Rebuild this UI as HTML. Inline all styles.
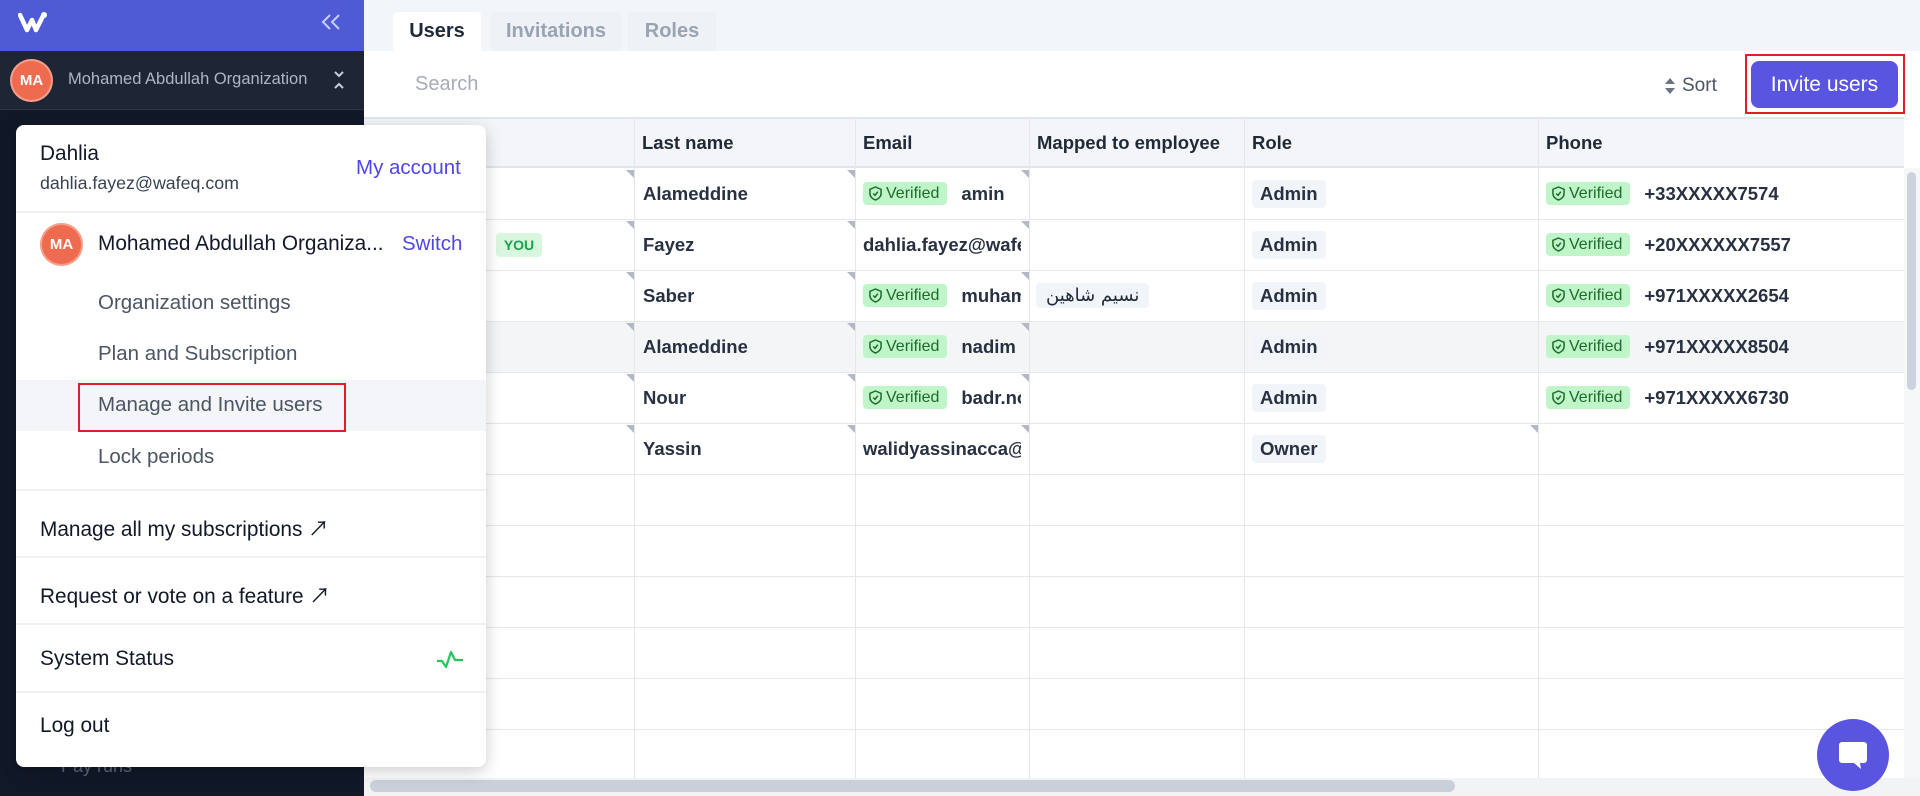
<!DOCTYPE html>
<html><head><meta charset="utf-8"><style>
*{box-sizing:border-box;margin:0;padding:0}
body{width:1920px;height:796px;overflow:hidden;position:relative;background:#fff;font-family:"Liberation Sans","Noto Sans CJK SC",sans-serif;color:#1f2937}
.a{position:absolute}
.sb{left:0;top:0;width:364px;height:796px;background:#111827}
.top{left:0;top:0;width:364px;height:51px;background:#4f5bd5}
.org{left:0;top:51px;width:364px;height:59px;background:#1e2636;border-bottom:1px solid #2d3546}
.av{border-radius:50%;background:#ee6b4f;color:#fff;font-weight:bold;display:flex;align-items:center;justify-content:center;box-shadow:inset 0 0 0 2px rgba(255,255,255,.35)}
.tabs{left:364px;top:0;width:1556px;height:51px;background:#f3f6f9}
.tab{top:12px;height:39px;font-size:20px;font-weight:bold;color:#9aa3b2;display:flex;align-items:center;justify-content:center;background:#eef2f6;border-radius:4px 4px 0 0}
.hdr{left:364px;top:117px;width:1540px;height:51px;background:#f3f5f8;border-top:2px solid #e2e6ea;border-bottom:2px solid #e2e6ea}
.th{top:117px;height:51px;display:flex;align-items:center;font-size:18.5px;font-weight:bold;color:#1f2937;padding-left:8px}
.vl{top:117px;width:1px;height:667px;background:#e5e7eb}
.hl{left:364px;width:1540px;height:1px;background:#e5e7eb}
.cell{height:51px;display:flex;align-items:center;font-size:18.5px;font-weight:bold;color:#283142;white-space:nowrap;overflow:hidden}
.ver{display:inline-flex;align-items:center;gap:4px;background:#bff5c9;color:#1d6b2b;font-weight:normal;font-size:16px;padding:2px 8px 2px 6px;border-radius:4px;height:23px;margin-right:14px}
.role{background:#f1f4f8;padding:3px 8px;border-radius:4px}
.tri{width:0;height:0;border-top:8px solid #b3b9c4;border-left:8px solid transparent}
.dd{left:16px;top:125px;width:470px;height:642px;background:#fff;border-radius:8px;box-shadow:0 4px 16px rgba(0,0,0,.2)}
.mi{font-size:20.8px;color:#111827}
.sub{font-size:20.5px;color:#4b5563}
.dv{left:16px;width:470px;height:2px;background:#eef0f3}
</style></head><body>
<div class="a sb"></div>
<div class="a top"></div>
<svg class="a" style="left:18px;top:11px" width="30" height="22" viewBox="0 0 30 22"><path d="M2 4 L9 19 L14 9 L18 19 L25 5" stroke="#fff" stroke-width="4.5" fill="none" stroke-linejoin="round" stroke-linecap="round"/><circle cx="26" cy="4" r="3" fill="#fff"/></svg>
<svg class="a" style="left:320px;top:13px" width="22" height="18" viewBox="0 0 22 18"><path d="M10 2 L3 9 L10 16 M19 2 L12 9 L19 16" stroke="#c7cdf5" stroke-width="2" fill="none"/></svg>
<div class="a org"></div>
<div class="a av" style="left:10px;top:59px;width:43px;height:43px;font-size:15px">MA</div>
<div class="a" style="left:68px;top:70px;font-size:16.5px;color:#aeb6c4">Mohamed Abdullah Organization</div>
<svg class="a" style="left:332px;top:70px" width="14" height="20" viewBox="0 0 14 20"><path d="M3 2 L7 6 L11 2 M3 18 L7 14 L11 18" stroke="#c9ced8" stroke-width="2" fill="none"/></svg>
<div class="a" style="left:61px;top:756px;font-size:18px;color:#5c6577">Pay runs</div>

<div class="a tabs"></div>
<div class="a tab" style="left:393px;width:88px;background:#fff;color:#1f2937">Users</div>
<div class="a tab" style="left:490px;width:132px">Invitations</div>
<div class="a tab" style="left:628px;width:88px">Roles</div>
<div class="a" style="left:415px;top:73px;font-size:20px;color:#a5acb8">Search</div>
<svg class="a" style="left:1664px;top:77px" width="12" height="18" viewBox="0 0 12 18"><path d="M6 1 L11 7 H1Z M6 17 L11 11 H1Z" fill="#6b7280"/></svg>
<div class="a" style="left:1682px;top:75px;font-size:19px;color:#4b5563">Sort</div>
<div class="a" style="left:1745px;top:54px;width:160px;height:60px;border:2px solid #e11d2a"></div>
<div class="a" style="left:1751px;top:61px;width:147px;height:47px;background:#5a55e0;border-radius:8px;color:#fff;font-size:21px;display:flex;align-items:center;justify-content:center">Invite users</div>

<div class="a hdr"></div>
<div class="a th" style="left:364px;width:270px">First name</div>
<div class="a th" style="left:634px">Last name</div>
<div class="a th" style="left:855px">Email</div>
<div class="a th" style="left:1029px">Mapped to employee</div>
<div class="a th" style="left:1244px">Role</div>
<div class="a th" style="left:1538px">Phone</div>

<div class="a" style="left:364px;top:321px;width:1540px;height:51px;background:#f3f5f7"></div>
<div class="a hl" style="top:219px"></div><div class="a hl" style="top:270px"></div><div class="a hl" style="top:321px"></div><div class="a hl" style="top:372px"></div><div class="a hl" style="top:423px"></div><div class="a hl" style="top:474px"></div><div class="a hl" style="top:525px"></div><div class="a hl" style="top:576px"></div><div class="a hl" style="top:627px"></div><div class="a hl" style="top:678px"></div><div class="a hl" style="top:729px"></div>
<div class="a vl" style="left:634px"></div><div class="a vl" style="left:855px"></div><div class="a vl" style="left:1029px"></div><div class="a vl" style="left:1244px"></div><div class="a vl" style="left:1538px"></div>

<div class="a tri" style="left:626px;top:170px"></div><div class="a tri" style="left:847px;top:170px"></div><div class="a tri" style="left:1021px;top:170px"></div>
<div class="a tri" style="left:626px;top:221px"></div><div class="a tri" style="left:847px;top:221px"></div><div class="a tri" style="left:1021px;top:221px"></div>
<div class="a tri" style="left:626px;top:272px"></div><div class="a tri" style="left:847px;top:272px"></div><div class="a tri" style="left:1021px;top:272px"></div>
<div class="a tri" style="left:626px;top:323px"></div><div class="a tri" style="left:847px;top:323px"></div><div class="a tri" style="left:1021px;top:323px"></div>
<div class="a tri" style="left:626px;top:374px"></div><div class="a tri" style="left:847px;top:374px"></div><div class="a tri" style="left:1021px;top:374px"></div>
<div class="a tri" style="left:626px;top:425px"></div><div class="a tri" style="left:847px;top:425px"></div><div class="a tri" style="left:1021px;top:425px"></div><div class="a tri" style="left:1530px;top:425px"></div>

<div class="a cell" style="left:372px;top:270px">Mohamed</div>
<div class="a" style="left:496px;top:233px;width:46px;height:24px;background:#d9f7df;color:#16a34a;font-size:14px;font-weight:bold;border-radius:4px;display:flex;align-items:center;justify-content:center">YOU</div>

<div class="a cell" style="left:643px;top:168px">Alameddine</div>
<div class="a cell" style="left:643px;top:219px">Fayez</div>
<div class="a cell" style="left:643px;top:270px">Saber</div>
<div class="a cell" style="left:643px;top:321px">Alameddine</div>
<div class="a cell" style="left:643px;top:372px">Nour</div>
<div class="a cell" style="left:643px;top:423px">Yassin</div>

<svg width="0" height="0" style="position:absolute"><defs><symbol id="sh" viewBox="0 0 14 16"><path d="M7 1 L13 3.5 V8 C13 11.5 10 14 7 15 C4 14 1 11.5 1 8 V3.5Z" fill="none" stroke="#1d6b2b" stroke-width="1.6"/><path d="M4.5 8 L6.5 10 L9.5 6" fill="none" stroke="#1d6b2b" stroke-width="1.6"/></symbol></defs></svg>

<div class="a cell" style="left:863px;top:168px;width:158px"><span class="ver"><svg width="13" height="15"><use href="#sh"/></svg>Verified</span>amin</div>
<div class="a cell" style="left:863px;top:219px;width:158px">dahlia.fayez@wafeq.com</div>
<div class="a cell" style="left:863px;top:270px;width:158px"><span class="ver"><svg width="13" height="15"><use href="#sh"/></svg>Verified</span>muhammad</div>
<div class="a cell" style="left:863px;top:321px;width:158px"><span class="ver"><svg width="13" height="15"><use href="#sh"/></svg>Verified</span>nadim</div>
<div class="a cell" style="left:863px;top:372px;width:158px"><span class="ver"><svg width="13" height="15"><use href="#sh"/></svg>Verified</span>badr.nour</div>
<div class="a cell" style="left:863px;top:423px;width:158px">walidyassinacca@</div>

<div class="a cell" style="left:1036px;top:270px"><span style="background:#f1f4f8;padding:2px 10px;border-radius:4px;font-weight:normal;font-family:'DejaVu Sans',sans-serif;font-size:18px;color:#1f2937">نسيم شاهين</span></div>

<div class="a cell" style="left:1252px;top:168px"><span class="role">Admin</span></div>
<div class="a cell" style="left:1252px;top:219px"><span class="role">Admin</span></div>
<div class="a cell" style="left:1252px;top:270px"><span class="role">Admin</span></div>
<div class="a cell" style="left:1252px;top:321px"><span class="role">Admin</span></div>
<div class="a cell" style="left:1252px;top:372px"><span class="role">Admin</span></div>
<div class="a cell" style="left:1252px;top:423px"><span class="role">Owner</span></div>

<div class="a cell" style="left:1546px;top:168px"><span class="ver"><svg width="13" height="15"><use href="#sh"/></svg>Verified</span>+33XXXXX7574</div>
<div class="a cell" style="left:1546px;top:219px"><span class="ver"><svg width="13" height="15"><use href="#sh"/></svg>Verified</span>+20XXXXXX7557</div>
<div class="a cell" style="left:1546px;top:270px"><span class="ver"><svg width="13" height="15"><use href="#sh"/></svg>Verified</span>+971XXXXX2654</div>
<div class="a cell" style="left:1546px;top:321px"><span class="ver"><svg width="13" height="15"><use href="#sh"/></svg>Verified</span>+971XXXXX8504</div>
<div class="a cell" style="left:1546px;top:372px"><span class="ver"><svg width="13" height="15"><use href="#sh"/></svg>Verified</span>+971XXXXX6730</div>

<div class="a" style="left:1904px;top:168px;width:16px;height:616px;background:#f6f7f9"></div>
<div class="a" style="left:1907px;top:172px;width:9px;height:218px;background:#cdd3dc;border-radius:5px"></div>
<div class="a" style="left:364px;top:778px;width:1556px;height:18px;background:#f1f3f5"></div>
<div class="a" style="left:370px;top:780px;width:1085px;height:12px;background:#c9d0da;border-radius:6px"></div>
<div class="a" style="left:1817px;top:719px;width:72px;height:72px;border-radius:50%;background:#5a55e0"></div>
<svg class="a" style="left:1836px;top:738px" width="34" height="34" viewBox="0 0 34 34"><path d="M6 4 H28 A3 3 0 0 1 31 7 V22 A3 3 0 0 1 28 25 H24 L25 31 L18 25 H6 A3 3 0 0 1 3 22 V7 A3 3 0 0 1 6 4Z" fill="#fff"/></svg>

<div class="a dd"></div>
<div class="a mi" style="left:40px;top:142px">Dahlia</div>
<div class="a" style="left:40px;top:173px;font-size:17.8px;color:#374151">dahlia.fayez@wafeq.com</div>
<div class="a" style="left:356px;top:156px;font-size:20.5px;color:#4f46e5">My account</div>
<div class="a dv" style="top:211px"></div>
<div class="a av" style="left:40px;top:223px;width:43px;height:43px;font-size:15px">MA</div>
<div class="a mi" style="left:98px;top:232px">Mohamed Abdullah Organiza...</div>
<div class="a" style="left:402px;top:232px;font-size:20.5px;color:#4f46e5">Switch</div>
<div class="a sub" style="left:98px;top:291px">Organization settings</div>
<div class="a sub" style="left:98px;top:342px">Plan and Subscription</div>
<div class="a" style="left:16px;top:380px;width:470px;height:51px;background:#f3f5f8"></div>
<div class="a" style="left:78px;top:383px;width:268px;height:49px;border:2px solid #e11d2a"></div>
<div class="a sub" style="left:98px;top:393px">Manage and Invite users</div>
<div class="a sub" style="left:98px;top:445px">Lock periods</div>
<div class="a dv" style="top:489px"></div>
<div class="a mi" style="left:40px;top:512px">Manage all my subscriptions ↗</div>
<div class="a dv" style="top:556px"></div>
<div class="a mi" style="left:40px;top:579px">Request or vote on a feature ↗</div>
<div class="a dv" style="top:623px"></div>
<div class="a mi" style="left:40px;top:647px">System Status</div>
<svg class="a" style="left:436px;top:649px" width="28" height="20" viewBox="0 0 28 20"><path d="M1 12 H6 L10 18 L15 3 L19 11 H27" stroke="#22c55e" stroke-width="2.2" fill="none" stroke-linejoin="round"/></svg>
<div class="a dv" style="top:691px"></div>
<div class="a mi" style="left:40px;top:714px">Log out</div>
</body></html>
